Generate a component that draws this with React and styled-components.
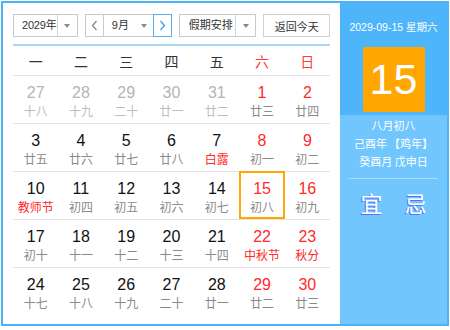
import React from "react";
import styled, { createGlobalStyle } from "styled-components";

const Global = createGlobalStyle`
  html, body { margin: 0; padding: 0; background: #fff; }
  body { font-family: "Liberation Sans", "Noto Sans CJK SC", Arial, sans-serif; }
`;

const Widget = styled.div`
  margin: 1px;
  width: 448px;
  height: 325px;
  box-sizing: border-box;
  border: 2px solid #50b2f6;
  display: flex;
  background: #fff;
`;

const Main = styled.div`
  width: 337px;
  box-sizing: border-box;
  padding: 11px 10px 0 10px;
  display: flex;
  flex-direction: column;
`;

const Toolbar = styled.div`
  display: flex;
  align-items: center;
  height: 23px;
  padding-bottom: 7px;
  border-bottom: 2px solid #a9d8f7;
`;

const Select = styled.div`
  display: flex;
  height: 23px;
  box-sizing: border-box;
  width: ${(p) => p.$w}px;
  margin-right: ${(p) => p.$mr || 0}px;
  border: 1px solid #c9c9c9;
  background: #fff;
  font-family: "Liberation Sans", "Noto Sans CJK SC", sans-serif;
  font-size: 11px;
  color: #333;
`;

const SelectText = styled.div`
  flex: 1;
  min-width: 0;
  white-space: nowrap;
  display: flex;
  align-items: center;
  padding-left: ${(p) => p.$pl}px;
  line-height: 21px;
  letter-spacing: ${(p) => p.$ls || 0}px;
`;

const Caret = styled.div`
  flex: none;
  width: ${(p) => p.$w || 19}px;
  display: flex;
  align-items: center;
  justify-content: center;
  border-left: ${(p) => (p.$sep ? "1px solid #d6d6d6" : "none")};
  &::after {
    content: "";
    border-left: 3.5px solid transparent;
    border-right: 3.5px solid transparent;
    border-top: 4px solid #8a8a8a;
  }
`;

const Group = styled.div`
  display: flex;
  height: 23px;
  margin-right: 7px;
`;

const Arrow = styled.div`
  width: 19px;
  height: 23px;
  box-sizing: border-box;
  border: 1px solid ${(p) => (p.$active ? "#5aaef0" : "#c9c9c9")};
  margin-left: ${(p) => (p.$overlap ? "-1px" : "0")};
  display: flex;
  align-items: center;
  justify-content: center;
  background: #fff;
  position: relative;
  z-index: ${(p) => (p.$active ? 1 : 0)};
`;

const MonthSelect = styled.div`
  width: 51px;
  height: 23px;
  box-sizing: border-box;
  margin-left: -1px;
  border-top: 1px solid #c9c9c9;
  border-bottom: 1px solid #c9c9c9;
  display: flex;
  font-family: "Liberation Sans", "Noto Sans CJK SC", sans-serif;
  font-size: 11px;
  color: #333;
`;

const Button = styled.div`
  width: 68px;
  height: 23px;
  box-sizing: border-box;
  border: 1px solid #d0d0d0;
  display: flex;
  align-items: center;
  justify-content: center;
  white-space: nowrap;
  font-family: "Noto Sans CJK SC", sans-serif;
  font-size: 11px;
  color: #333;
`;

const Grid = styled.div`
  display: grid;
  grid-template-columns: repeat(7, 1fr);
`;

const WeekHead = styled.div`
  height: 29px;
  display: flex;
  align-items: center;
  justify-content: center;
  font-family: "Noto Sans CJK SC", sans-serif;
  font-size: 14px;
  color: ${(p) => (p.$red ? "#ff3b3b" : "#333")};
`;

const Cell = styled.div`
  height: 48px;
  box-sizing: border-box;
  border-top: 1px solid #e2e2e2;
  padding-top: 7px;
  display: flex;
  flex-direction: column;
  align-items: center;
  ${(p) => p.$sel && `outline: 2px solid #ffa600; outline-offset: -2px;`}
`;

const Num = styled.div`
  font-family: "Liberation Sans", Arial, sans-serif;
  font-size: 16px;
  line-height: 20px;
  color: ${(p) => (p.$other ? "#b4b4b4" : p.$red ? "#ff2a2a" : "#111")};
`;

const Lunar = styled.div`
  font-family: "Noto Sans CJK SC", sans-serif;
  font-size: 12px;
  line-height: 16px;
  color: ${(p) => (p.$fest ? "#ff2a2a" : p.$other ? "#bdbdbd" : "#8a8a8a")};
`;

const Side = styled.div`
  flex: 1;
  background: #72c6fe;
  display: flex;
  flex-direction: column;
  align-items: center;
  color: #fff;
  font-family: "Noto Sans CJK SC", sans-serif;
`;

const SideTop = styled.div`
  align-self: stretch;
  background: #4fb5fb;
  padding: 14px 0 3px;
  display: flex;
  flex-direction: column;
  align-items: center;
`;

const DateLine = styled.div`
  font-family: "Liberation Sans", "Noto Sans CJK SC", sans-serif;
  font-size: 10.5px;
  line-height: 20px;
  white-space: nowrap;
`;

const BigDay = styled.div`
  margin-top: 10px;
  width: 62px;
  height: 65px;
  background: #ffa700;
  border-radius: 2px;
  display: flex;
  align-items: center;
  justify-content: center;
  font-family: "Liberation Sans", Arial, sans-serif;
  font-size: 43px;
  color: #fff;
`;

const Info = styled.div`
  padding-top: 1px;
  font-size: 11px;
  line-height: 18px;
  text-align: center;
  white-space: nowrap;
`;

const Bracketed = styled.span`
  margin-left: 2px;
`;

const Divider = styled.div`
  align-self: stretch;
  margin: 8px 9px 0 8px;
  height: 1px;
  background: #a6dbff;
`;

const YiJi = styled.div`
  margin-top: 8px;
  display: flex;
  gap: 22px;
  font-size: 22px;
  line-height: 30px;
  text-shadow: -1px 1px 0 #5d6ef2;
`;

const Chevron = ({ dir, color }) => (
  <svg width="7" height="11" viewBox="0 0 7 11">
    <path
      d={dir === "left" ? "M5.5 1 L1.5 5.5 L5.5 10" : "M1.5 1 L5.5 5.5 L1.5 10"}
      fill="none"
      stroke={color}
      strokeWidth="1.3"
    />
  </svg>
);

const weekdays = ["一", "二", "三", "四", "五", "六", "日"];

const days = [
  [27, "十八", 1], [28, "十九", 1], [29, "二十", 1], [30, "廿一", 1], [31, "廿二", 1], [1, "廿三"], [2, "廿四"],
  [3, "廿五"], [4, "廿六"], [5, "廿七"], [6, "廿八"], [7, "白露", 0, 1], [8, "初一"], [9, "初二"],
  [10, "教师节", 0, 1], [11, "初四"], [12, "初五"], [13, "初六"], [14, "初七"], [15, "初八", 0, 0, 1], [16, "初九"],
  [17, "初十"], [18, "十一"], [19, "十二"], [20, "十三"], [21, "十四"], [22, "中秋节", 0, 1], [23, "秋分", 0, 1],
  [24, "十七"], [25, "十八"], [26, "十九"], [27, "二十"], [28, "廿一"], [29, "廿二"], [30, "廿三"],
];

export default function App() {
  return (
    <>
      <Global />
      <Widget>
        <Main>
          <Toolbar>
            <Select $w={66} $mr={7}>
              <SelectText $pl={8} $ls={-0.2}>2029年</SelectText>
              <Caret $sep />
            </Select>
            <Group>
              <Arrow>
                <Chevron dir="left" color="#888" />
              </Arrow>
              <MonthSelect>
                <SelectText $pl={9}>9月</SelectText>
                <Caret $w={20} />
              </MonthSelect>
              <Arrow $active $overlap>
                <Chevron dir="right" color="#3a9cf0" />
              </Arrow>
            </Group>
            <Select $w={79} $mr={7}>
              <SelectText $pl={9}>假期安排</SelectText>
              <Caret $sep />
            </Select>
            <Button>返回今天</Button>
          </Toolbar>
          <Grid>
            {weekdays.map((w, i) => (
              <WeekHead key={w} $red={i >= 5}>
                {w}
              </WeekHead>
            ))}
            {days.map(([n, l, other, fest, sel], i) => {
              const red = i % 7 >= 5;
              return (
                <Cell key={i} $sel={!!sel}>
                  <Num $other={!!other} $red={red}>
                    {n}
                  </Num>
                  <Lunar $other={!!other} $fest={!!fest}>
                    {l}
                  </Lunar>
                </Cell>
              );
            })}
          </Grid>
        </Main>
        <Side>
          <SideTop>
            <DateLine>2029-09-15 星期六</DateLine>
            <BigDay>15</BigDay>
          </SideTop>
          <Info>
            <div>八月初八</div>
            <div>
              己酉年<Bracketed>【鸡年】</Bracketed>
            </div>
            <div>癸酉月 戊申日</div>
          </Info>
          <Divider />
          <YiJi>
            <span>宜</span>
            <span>忌</span>
          </YiJi>
        </Side>
      </Widget>
    </>
  );
}
